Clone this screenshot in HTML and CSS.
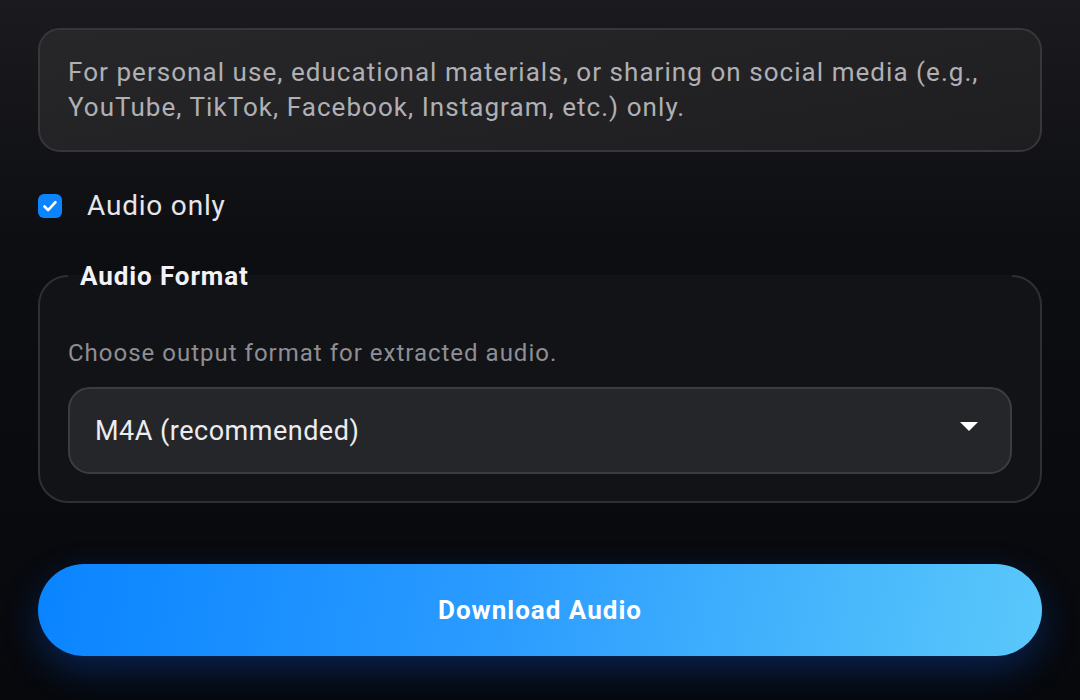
FILE: index.html
```html
<!DOCTYPE html>
<html lang="en">
<head>
<meta charset="utf-8">
<title>Download Audio</title>
<link rel="stylesheet" href="styles.css">
</head>
<body>
<main class="page">
  <div class="notice">For personal use, educational materials, or sharing on social media (e.g., YouTube, TikTok, Facebook, Instagram, etc.) only.</div>

  <label class="check-row">
    <input type="checkbox" class="check-input" checked>
    <span class="check-box">
      <svg viewBox="0 0 24 24" width="24" height="24"><path d="M6.5 12.5l3.6 3.6 7.4-8" fill="none" stroke="#fff" stroke-width="2.6" stroke-linecap="round" stroke-linejoin="round"/></svg>
    </span>
    <span class="check-label">Audio only</span>
  </label>

  <fieldset class="format">
    <legend class="format-legend">Audio Format</legend>
    <p class="format-desc">Choose output format for extracted audio.</p>
    <div class="select-wrap">
      <select class="select">
        <option>M4A (recommended)</option>
        <option>MP3</option>
        <option>OPUS</option>
      </select>
      <svg class="select-arrow" viewBox="0 0 18 10" width="18" height="10"><path d="M0 0h18L9 9z" fill="#fff"/></svg>
    </div>
  </fieldset>

  <button class="download">Download Audio</button>
</main>
</body>
</html>
```
FILE: styles.css
```css
html, body {
  margin: 0;
  height: 100%;
}
body {
  background: linear-gradient(180deg, #1b1b1f 0%, #0d0e12 35%, #06080c 100%);
  font-family: Roboto, "Noto Sans", "Liberation Sans", sans-serif;
  color: #e5e5ea;
  overflow: hidden;
}
.page {
  padding: 28px 38px 0;
  display: flex;
  flex-direction: column;
}
.notice {
  background: linear-gradient(170deg, #27272a 0%, #1e1e21 100%);
  border: 2px solid #37373a;
  border-radius: 22px;
  padding: 25px 28px 25px;
  font-size: 26px;
  line-height: 35px;
  letter-spacing: 1.05px;
  color: #b0b0b4;
}
.check-row {
  display: flex;
  align-items: center;
  gap: 25px;
  margin-top: 39px;
  cursor: pointer;
}
.check-input {
  display: none;
}
.check-box {
  width: 24px;
  height: 24px;
  border-radius: 6px;
  background: #0a84ff;
  display: flex;
}
.check-label {
  font-size: 28px;
  letter-spacing: 0.8px;
  color: #e5e5ea;
  line-height: 30px;
}
.format {
  margin: 40px 0 0;
  padding: 0 28px 27px;
  border: 2px solid #2f3034;
  border-radius: 30px;
  background: #121317;
  min-width: 0;
}
.format-legend {
  width: 100%;
  box-sizing: border-box;
  padding: 0 12px;
  font-size: 26px;
  font-weight: 700;
  letter-spacing: 0.9px;
  color: #f2f2f7;
  line-height: 30px;
}
.format-desc {
  margin: 48px 0 20px;
  font-size: 24px;
  line-height: 28px;
  letter-spacing: 1px;
  color: #8e8e93;
}
.select-wrap {
  position: relative;
}
.select {
  appearance: none;
  -webkit-appearance: none;
  width: 100%;
  height: 87px;
  box-sizing: border-box;
  background: #25262a;
  border: 2px solid #3c3d42;
  border-radius: 22px;
  padding: 0 25px;
  font-family: inherit;
  font-size: 27px;
  letter-spacing: 0.5px;
  color: #ececf0;
  outline: none;
}
.select-arrow {
  position: absolute;
  right: 34px;
  top: 35px;
}
.download {
  margin-top: 61px;
  height: 92px;
  border: none;
  border-radius: 46px;
  background: linear-gradient(100deg, #0a84ff 0%, #2a9bff 45%, #5ac8fa 100%);
  color: #fff;
  font-family: inherit;
  font-size: 26px;
  font-weight: 700;
  letter-spacing: 1px;
  box-shadow: 0 14px 36px rgba(10, 100, 255, 0.28);
  cursor: pointer;
}
```
